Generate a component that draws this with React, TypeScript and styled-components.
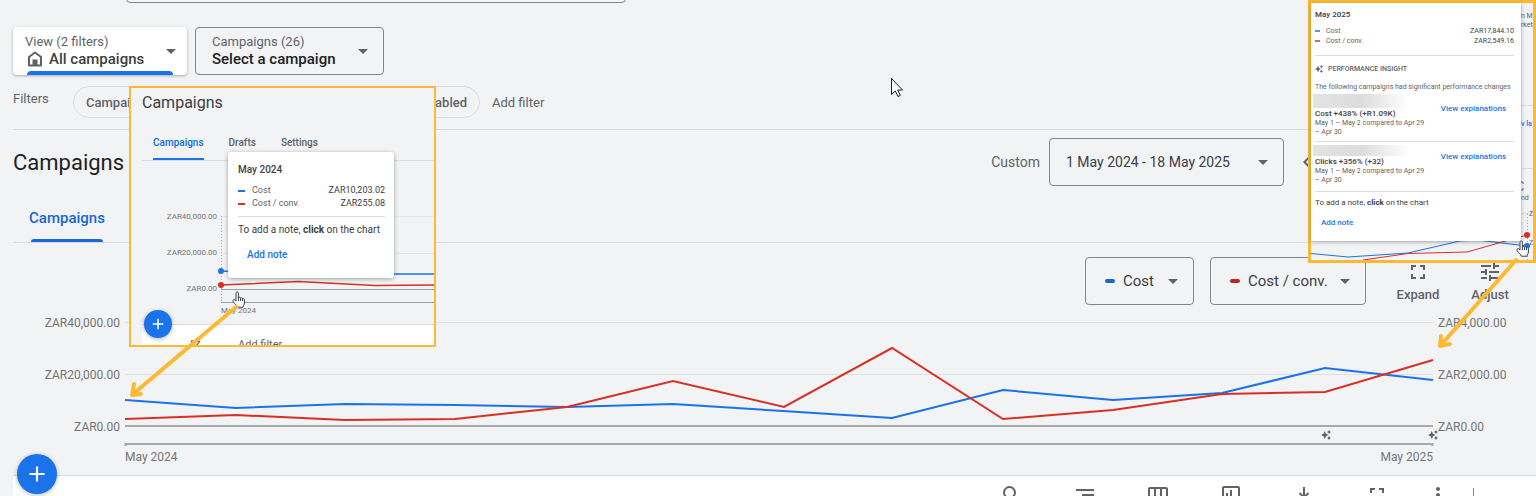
import React from "react";
import styled, { createGlobalStyle } from "styled-components";
import {
  MdAdd,
  MdFullscreen,
  MdKeyboardArrowLeft,
  MdKeyboardArrowRight,
  MdMoreVert,
  MdOutlineAssessment,
  MdOutlineFilterAlt,
  MdOutlineViewWeek,
  MdSearch,
  MdSegment,
  MdTune,
} from "react-icons/md";

const color = {
  page: "#f1f3f4",
  line: "#dadce0",
  outline: "#80868b",
  text: "#3c4043",
  muted: "#5f6368",
  axis: "#757575",
  blue: "#1a73e8",
  blueDark: "#1967d2",
  red: "#d93025",
  marker: "#fdb933",
};

const GlobalStyle = createGlobalStyle`
  *, *::before, *::after { box-sizing: border-box; }
  body {
    margin: 0;
    background: ${color.page};
    color: ${color.text};
    font-family: Roboto, "Liberation Sans", sans-serif;
    font-size: 13px;
  }
  button, select, input { font: inherit; color: inherit; }
  a { color: ${color.blue}; text-decoration: none; }
`;

const Page = styled.div`
  position: relative;
  height: 100vh;
  overflow: hidden;
`;

const SearchStrip = styled.header`
  display: flex;
  align-items: flex-end;
  height: 3px;
  padding-left: 126px;
  overflow: hidden;
`;

const SearchInput = styled.input`
  flex: none;
  width: 500px;
  height: 48px;
  border: 1px solid ${color.outline};
  border-radius: 4px;
  background: transparent;
`;

const ScopeBar = styled.div`
  display: flex;
  gap: 8px;
  padding: 24px 13px 0;
`;

const ScopePicker = styled.label<{ $active?: boolean; $width: number }>`
  position: relative;
  display: flex;
  align-items: center;
  width: ${(p) => p.$width}px;
  height: 48px;
  border-radius: 4px;
  padding: ${(p) => (p.$active ? "0 11px 0 12px" : "0 15px 0 16px")};
  border: ${(p) => (p.$active ? "0" : `1px solid ${color.outline}`)};
  background: ${(p) => (p.$active ? "#fff" : "transparent")};
  box-shadow: ${(p) => (p.$active ? "0 1px 3px rgba(60, 64, 67, 0.4)" : "none")};
  color: ${(p) => (p.$active ? color.text : "#202124")};
`;

const ScopeText = styled.span`
  display: flex;
  flex: 1;
  flex-direction: column;
`;

const ScopeCaption = styled.span`
  line-height: 16px;
  color: ${color.muted};
`;

const ScopeValue = styled.span<{ $icon?: boolean }>`
  display: flex;
  align-items: center;
  gap: 6px;
  height: 18px;
  padding-left: ${(p) => (p.$icon ? 2 : 0)}px;
  font-size: 15px;
  font-weight: 500;
`;

const ActiveBar = styled.span`
  position: absolute;
  left: 14px;
  right: 14px;
  bottom: 0;
  height: 4px;
  border-radius: 4px 4px 0 0;
  background: ${color.blue};
`;

const PlainSelect = styled.select`
  flex: 1;
  min-width: 0;
  padding: 0;
  border: 0;
  background: transparent;
  appearance: none;
  outline: none;
`;

const CaretShape = styled.span`
  flex: none;
  width: 0;
  height: 0;
  border: 5px solid transparent;
  border-top-color: ${color.muted};
  border-bottom: 0;
`;

const FilterBar = styled.div`
  display: flex;
  margin: 11px 0 0 13px;
  padding-bottom: 11px;
  border-bottom: 1px solid ${color.line};
  color: ${color.muted};
`;

const FilterLabel = styled.span`
  width: 60px;
  line-height: 26px;
`;

const ChipGroup = styled.div`
  display: flex;
  gap: 8px;
  width: 407px;
`;

const Chip = styled.button<{ $grow?: boolean }>`
  flex: ${(p) => (p.$grow ? 1 : "none")};
  height: 32px;
  padding: 0 12px;
  border: 1px solid ${color.line};
  border-radius: 16px;
  background: transparent;
  font-weight: 500;
  text-align: ${(p) => (p.$grow ? "right" : "left")};
`;

const AddFilter = styled.button`
  margin-left: 12px;
  padding: 0;
  border: 0;
  background: none;
`;

const TitleBar = styled.div`
  display: flex;
  align-items: center;
  height: 64px;
  padding-left: 13px;
`;

const Title = styled.h1`
  flex: 1;
  margin: 0;
  color: #202124;
  font-size: 22px;
  font-weight: 400;
`;

const RangeLabel = styled.label`
  margin-right: 9px;
  font-size: 14px;
  color: ${color.muted};
`;

const OutlinedPicker = styled.label<{ $width: number; $wide?: boolean }>`
  display: flex;
  align-items: center;
  gap: 8px;
  width: ${(p) => p.$width}px;
  height: 48px;
  padding: 0 15px 0 ${(p) => (p.$wide ? 16 : 19)}px;
  border: 1px solid ${color.outline};
  border-radius: 4px;
  font-size: ${(p) => (p.$wide ? 14 : 15)}px;
`;

const RangeNav = styled.div`
  display: flex;
  width: 241px;
  margin-left: 11px;
`;

const IconButton = styled.button`
  display: flex;
  padding: 0;
  border: 0;
  background: none;
  color: ${color.muted};
`;

const TabBar = styled.nav`
  display: flex;
  height: 49px;
  margin-left: 13px;
  padding-left: 16px;
  border-bottom: 1px solid ${color.line};
`;

const Tab = styled.a`
  position: relative;
  color: ${color.blueDark};
  font-size: 15px;
  font-weight: 500;
  line-height: 48px;

  &::after {
    content: "";
    position: absolute;
    left: 2px;
    right: 2px;
    bottom: 0;
    height: 3px;
    border-radius: 3px 3px 0 0;
    background: ${color.blueDark};
  }
`;

const MetricBar = styled.div`
  display: flex;
  justify-content: flex-end;
  gap: 16px;
  padding: 14px 10px 0 0;
`;

const Swatch = styled.span<{ $color: string }>`
  flex: none;
  width: 10px;
  height: 4px;
  border-radius: 2px;
  background: ${(p) => p.$color};
`;

const ToolGroup = styled.div`
  display: flex;
`;

const ToolButton = styled.button`
  display: flex;
  flex-direction: column;
  align-items: center;
  width: 72px;
  padding: 3px 0 0;
  border: 0;
  background: none;
  color: ${color.muted};
  font-weight: 500;
  line-height: 21px;
`;

const ChartGrid = styled.section`
  display: grid;
  grid-template-columns: 107px 1fr 98px;
  column-gap: 5px;
  padding-bottom: 9px;
  border-bottom: 1px solid ${color.line};
  margin-left: 13px;
  color: ${color.axis};
  font-size: 12px;
  line-height: 18px;
`;

const ScaleColumn = styled.div<{ $end?: boolean }>`
  display: flex;
  flex-direction: column;
  gap: 34px;
  padding-top: 9px;
  text-align: ${(p) => (p.$end ? "left" : "right")};
`;

const Plot = styled.div`
  position: relative;
  min-width: 0;
`;

const PlotSvg = styled.svg`
  display: block;
  width: 100%;
  height: 141px;
  overflow: visible;

  polyline, line, path { vector-effect: non-scaling-stroke; }
`;

const Dates = styled.div`
  display: flex;
  justify-content: space-between;
  margin-top: 2px;
`;

const InsightMark = styled.span<{ $at: number }>`
  position: absolute;
  top: 125px;
  left: ${(p) => p.$at}%;
  display: flex;
  margin-left: -5px;
  color: ${color.muted};
`;

const TableBar = styled.div`
  display: flex;
  justify-content: flex-end;
  height: 60px;
  margin-left: 13px;
  padding: 7px 62px 0 0;
  background: #fff;
`;

const TableTool = styled.button<{ $narrow?: boolean }>`
  display: flex;
  justify-content: center;
  width: ${(p) => (p.$narrow ? 50 : 73)}px;
  padding: 0;
  border: 0;
  background: none;
  color: ${color.muted};
`;

const Divider = styled.span`
  width: 1px;
  margin: 5px 0 0 10px;
  background: ${color.outline};
`;

const Fab = styled.button<{ $small?: boolean }>`
  position: absolute;
  left: ${(p) => (p.$small ? 13 : 17)}px;
  bottom: ${(p) => (p.$small ? 7 : 2)}px;
  display: flex;
  align-items: center;
  justify-content: center;
  width: ${(p) => (p.$small ? 28 : 40)}px;
  height: ${(p) => (p.$small ? 28 : 40)}px;
  padding: 0;
  border: 0;
  border-radius: 50%;
  background: ${color.blue};
  box-shadow: 0 1px 4px rgba(60, 64, 67, 0.4);
  color: #fff;
`;

const Pointer = styled.svg<{ $x: number; $y: number }>`
  position: absolute;
  left: ${(p) => p.$x}px;
  top: ${(p) => p.$y}px;
  overflow: visible;
`;

/* Callouts that lie over the page */

const StartCallout = styled.aside`
  position: absolute;
  top: 86px;
  left: 129px;
  width: 307px;
  height: 261px;
  border: 2px solid ${color.marker};
  background: ${color.page};
`;

const CalloutClip = styled.div`
  display: flex;
  flex-direction: column;
  height: 100%;
  overflow: hidden;
`;

const CalloutTitle = styled.h2`
  flex: none;
  margin: 0;
  padding-left: 11px;
  font-size: 16px;
  font-weight: 400;
  line-height: 30px;
`;

const CalloutTabs = styled.nav`
  display: flex;
  flex: none;
  gap: 25px;
  height: 43px;
  margin-left: 11px;
  padding-left: 11px;
  border-bottom: 1px solid ${color.line};
`;

const CalloutTab = styled.a<{ $active?: boolean }>`
  padding-top: 17px;
  border-bottom: 2px solid ${(p) => (p.$active ? color.blue : "transparent")};
  color: ${(p) => (p.$active ? color.blueDark : color.muted)};
  font-size: 10px;
  font-weight: 500;
  line-height: 16px;
`;

const CalloutChart = styled.div`
  display: grid;
  flex: none;
  grid-template-columns: 86px 1fr;
  column-gap: 4px;
  height: 163px;
  color: ${color.axis};
  font-size: 8px;
  line-height: 12px;
`;

const CalloutScale = styled.div`
  display: flex;
  flex-direction: column;
  gap: 24px;
  padding-top: 50px;
  text-align: right;
`;

const CalloutPlot = styled.div`
  display: flex;
  flex-direction: column;
  gap: 2px;
  min-width: 0;
`;

const CalloutSvg = styled.svg`
  display: block;
  flex: none;
  overflow: visible;
`;

const CalloutFooter = styled.div`
  display: flex;
  flex: none;
  gap: 35px;
  margin-left: 11px;
  padding: 13px 0 0 46px;
  border-top: 1px solid ${color.line};
  background: #fff;
  color: ${color.muted};
  font-size: 11px;
  line-height: 14px;
`;

const StartTip = styled.div`
  position: absolute;
  top: 64px;
  left: 97px;
  width: 166px;
  height: 126px;
  padding: 10px 9px 0 10px;
  border-radius: 3px;
  background: #fff;
  box-shadow: 0 1px 4px rgba(60, 64, 67, 0.45);
`;

const TipTitle = styled.h3<{ $size: number }>`
  margin: 0;
  font-size: ${(p) => p.$size}px;
  font-weight: 500;
  line-height: ${(p) => (p.$size > 8 ? 16 : 12)}px;
`;

const TipTable = styled.table<{ $small?: boolean }>`
  width: 100%;
  margin-top: ${(p) => (p.$small ? 5 : 6)}px;
  border-collapse: collapse;
  font-size: ${(p) => (p.$small ? 7 : 9)}px;
  line-height: ${(p) => (p.$small ? 10 : 13)}px;

  th {
    padding: 0;
    color: ${color.muted};
    font-weight: 400;
    text-align: left;
  }
  td {
    padding: 0;
    text-align: right;
  }
`;

const TipLabel = styled.span<{ $small?: boolean }>`
  display: flex;
  align-items: center;
  gap: ${(p) => (p.$small ? 6 : 7)}px;
`;

const Dash = styled.span<{ $color: string; $small?: boolean }>`
  width: ${(p) => (p.$small ? 5 : 7)}px;
  height: 2px;
  background: ${(p) => p.$color};
  opacity: ${(p) => (p.$small ? 0.75 : 1)};
`;

const TipRule = styled.hr<{ $top: number }>`
  height: 1px;
  margin: ${(p) => p.$top}px 0 0;
  border: 0;
  background: ${color.line};
`;

const TipText = styled.p<{ $small?: boolean }>`
  margin: ${(p) => (p.$small ? 5 : 6)}px 0 0;
  font-size: ${(p) => (p.$small ? 8 : 10)}px;
  line-height: ${(p) => (p.$small ? 12 : 14)}px;
  white-space: nowrap;
`;

const TipAction = styled.button<{ $small?: boolean }>`
  display: block;
  margin: ${(p) => (p.$small ? "8px 0 0 6px" : "10px 0 0 9px")};
  padding: 0;
  border: 0;
  background: none;
  color: ${color.blue};
  font-size: ${(p) => (p.$small ? 8 : 10)}px;
  font-weight: 500;
  line-height: ${(p) => (p.$small ? 12 : 16)}px;
`;

const EndCallout = styled.aside`
  position: absolute;
  top: 0;
  right: 0;
  width: 228px;
  height: 263px;
  border: 3px solid ${color.marker};
  background: ${color.page};
`;

const Backdrop = styled.div`
  position: absolute;
  inset: 0;
  overflow: hidden;
`;

const EdgeText = styled.span<{ $y: number; $x?: number; $link?: boolean }>`
  position: absolute;
  left: ${(p) => p.$x ?? 210}px;
  top: ${(p) => p.$y}px;
  color: ${(p) => (p.$link ? color.blue : color.muted)};
  font-size: 7px;
  font-weight: ${(p) => (p.$link ? 500 : 400)};
  line-height: 10px;
  white-space: nowrap;
`;

const BackdropSvg = styled.svg`
  position: absolute;
  inset: 0;
`;

const EndTip = styled.div`
  position: relative;
  width: 210px;
  height: 238px;
  padding: 6px 7px 0 4px;
  background: #fff;
  box-shadow: 0 1px 4px rgba(60, 64, 67, 0.45);
`;

const InsightHeading = styled.h4`
  display: flex;
  align-items: center;
  gap: 5px;
  margin: 7px 0;
  color: ${color.muted};
  font-size: 7px;
  font-weight: 500;
  line-height: 12px;
`;

const InsightIntro = styled.p`
  margin: 0 0 2px;
  color: ${color.muted};
  font-size: 7px;
  line-height: 10px;
  white-space: nowrap;
`;

const Insight = styled.article<{ $tall?: boolean }>`
  display: flex;
  justify-content: space-between;
  padding: ${(p) => (p.$tall ? "0 8px 4px 0" : "3px 8px 6px 0")};
  border-bottom: 1px solid ${color.line};
  color: ${color.muted};
  font-size: 7px;
  line-height: 9px;
`;

const InsightBody = styled.div`
  width: 115px;
  white-space: nowrap;
`;

const HiddenName = styled.div<{ $tall?: boolean }>`
  width: 96px;
  height: ${(p) => (p.$tall ? 14 : 11)}px;
  margin-left: -2px;
  background: linear-gradient(90deg, #e3e3e3, #dcdcdc 50%, #fff);
`;

const InsightName = styled.strong`
  display: block;
  color: ${color.text};
  font-size: 8px;
  font-weight: 500;
  line-height: 11px;
`;

const InsightLink = styled.a<{ $tall?: boolean }>`
  margin-top: ${(p) => (p.$tall ? 10 : 7)}px;
  font-size: 8px;
  font-weight: 500;
  line-height: 10px;
`;

const Caret = () => <CaretShape aria-hidden="true" />;

const Home = () => (
  <svg width="16" height="16" viewBox="0 0 16 16" fill="none" aria-hidden="true">
    <path d="M2 14.5V6L8 1.5L14 6V14.5Z" stroke={color.muted} strokeWidth="2" strokeLinejoin="round" />
    <path d="M5.5 14.5V8.5H10.5V14.5Z" fill={color.muted} />
  </svg>
);

const Sparkle = ({ size }: { size: number }) => (
  <svg width={size} height={size} viewBox="0 0 20 20" fill="currentColor" aria-hidden="true">
    <path d="M7.500 2L10 7.500L15 10L10 12.500L7.500 18L5 12.500L0 10L5 7.500Z" />
    <path d="M16 0L17.500 2.500L20 4L17.500 5.500L16 8L14.500 5.500L12 4L14.500 2.500Z" />
    <path d="M16 12L17.500 14.500L20 16L17.500 17.500L16 20L14.500 17.500L12 16L14.500 14.500Z" />
  </svg>
);

const DownloadIcon = () => (
  <svg width="24" height="24" viewBox="0 0 24 24" fill="none" stroke="currentColor" strokeWidth="2" aria-hidden="true">
    <path d="M12 4V15M7.500 10L12 14.500L16.500 10M5 19H19" />
  </svg>
);

const Hand = ({ x, y }: { x: number; y: number }) => (
  <Pointer $x={x} $y={y} width="13" height="17" viewBox="0 0 13 17" aria-hidden="true">
    <path
      d="M4 10V2.2C4 .4 6.4 .4 6.4 2.2V7C6.6 5.8 8.4 6 8.5 7.2C9 6.3 10.4 6.6 10.5 7.8C11.2 7.2 12.4 7.6 12.4 8.8V12C12.4 14 11 14.4 11 16.2H5.2C5 14.4 3 13.4 1.2 10.6C.2 9 2 8 3 9Z"
      fill="#fff"
      stroke="#3a3f4b"
      strokeWidth="1"
    />
    <path d="M6.4 7V10M8.5 7.4V10M10.5 8V10" stroke="#3a3f4b" strokeWidth="1" />
  </Pointer>
);

const costPoints =
  "0,95 111,103 220,99 330,100 442,102 548,99 658,106 767,113 878,85 988,95 1097,88 1200,63 1308,75";
const convPoints =
  "0,114 111,110 220,115 330,114 442,102 548,76 659,102 767,43 878,114 988,105 1097,89 1200,87 1308,55";

const MainChart = () => (
  <PlotSvg viewBox="0 0 1308 141" preserveAspectRatio="none" role="img" aria-label="Cost and cost per conversion by month">
    <path d="M0 17.5H1308M0 69.5H1308" stroke="#e0e0e0" />
    <path d="M0 121H1308" stroke="#a6a8aa" strokeWidth="2" />
    <path d="M0.5 141V139H1307.5V141" fill="none" stroke="#a6a8aa" strokeWidth="2" />
    <polyline points={costPoints} fill="none" stroke={color.blue} strokeWidth="2" />
    <polyline points={convPoints} fill="none" stroke={color.red} strokeWidth="2" />
  </PlotSvg>
);

const Start = () => (
  <StartCallout aria-label="Start of period">
    <CalloutClip>
      <CalloutTitle>Campaigns</CalloutTitle>
      <CalloutTabs>
        <CalloutTab href="#campaigns" $active>Campaigns</CalloutTab>
        <CalloutTab href="#drafts">Drafts</CalloutTab>
        <CalloutTab href="#settings">Settings</CalloutTab>
      </CalloutTabs>
      <CalloutChart>
        <CalloutScale>
          <span>ZAR40,000.00</span>
          <span>ZAR20,000.00</span>
          <span>ZAR0.00</span>
        </CalloutScale>
        <CalloutPlot>
          <CalloutSvg width="213" height="142" viewBox="0 0 213 142" aria-hidden="true">
            <path d="M0 55.5H213M0 92.5H213" stroke="#e3e5e7" />
            <path d="M0 128.5H213M0 141.5H213" stroke="#9a9c9f" />
            <path d="M.5 55V142" stroke="#aaa" strokeDasharray="1 2" />
            <polyline points="0,110 77,114 173,113 213,113" fill="none" stroke={color.blue} strokeWidth="1.5" />
            <polyline points="0,124 77,120.5 154,124.500 213,124" fill="none" stroke={color.red} strokeWidth="1.5" />
            <circle cx="0" cy="110" r="3" fill={color.blue} />
            <circle cx="0" cy="124" r="3" fill={color.red} />
          </CalloutSvg>
          <span>May 2024</span>
        </CalloutPlot>
      </CalloutChart>
      <CalloutFooter>
        <MdOutlineFilterAlt size={15} />
        <span>Add filter</span>
      </CalloutFooter>
    </CalloutClip>
    <Fab type="button" $small aria-label="Create">
      <MdAdd size={18} />
    </Fab>
    <StartTip>
      <TipTitle $size={10}>May 2024</TipTitle>
      <TipTable>
        <tbody>
          <tr>
            <th scope="row"><TipLabel><Dash $color={color.blue} />Cost</TipLabel></th>
            <td>ZAR10,203.02</td>
          </tr>
          <tr>
            <th scope="row"><TipLabel><Dash $color={color.red} />Cost / conv.</TipLabel></th>
            <td>ZAR255.08</td>
          </tr>
        </tbody>
      </TipTable>
      <TipRule $top={6} />
      <TipText>To add a note, <b>click</b> on the chart</TipText>
      <TipAction type="button">Add note</TipAction>
    </StartTip>
    <Hand x={101} y={203} />
    <Pointer $x={-2} $y={214} width="112" height="96" viewBox="0 0 112 96" aria-hidden="true">
      <path d="M107 5L3 93M5 82L3 93L12 92" fill="none" stroke={color.marker} strokeWidth="4" strokeLinejoin="round" strokeLinecap="round" />
    </Pointer>
  </StartCallout>
);

const End = () => (
  <EndCallout aria-label="End of period">
    <Backdrop>
      <EdgeText $y={8}>n M</EdgeText>
      <EdgeText $y={17}>rket</EdgeText>
      <EdgeText $y={116} $link>v la</EdgeText>
      <EdgeText $y={190}>nd</EdgeText>
      <EdgeText $y={206} $x={218}>Z</EdgeText>
      <EdgeText $y={235} $x={218}>Z</EdgeText>
      <BackdropSvg width="222" height="257" viewBox="0 0 222 257" aria-hidden="true">
        <path d="M210 102.500H222M210 165.500H222M210 210.500H217" stroke={color.line} />
        <path d="M210 179H212V181M210 187H212V185" fill="none" stroke={color.muted} />
        <path d="M216.500 211V257" stroke="#aaa" strokeDasharray="1 2" />
        <polyline points="0,250.500 37,254 97,250 149,238 166,237 216,243" fill="none" stroke={color.blue} />
        <polyline points="52,257 97,250.500 156,249 216,232" fill="none" stroke={color.red} />
        <circle cx="216" cy="232" r="3" fill={color.red} />
        <circle cx="216" cy="243" r="3" fill={color.blue} />
      </BackdropSvg>
    </Backdrop>
    <EndTip>
      <TipTitle $size={8}>May 2025</TipTitle>
      <TipTable $small>
        <tbody>
          <tr>
            <th scope="row"><TipLabel $small><Dash $small $color={color.blue} />Cost</TipLabel></th>
            <td>ZAR17,844.10</td>
          </tr>
          <tr>
            <th scope="row"><TipLabel $small><Dash $small $color={color.red} />Cost / conv.</TipLabel></th>
            <td>ZAR2,549.16</td>
          </tr>
        </tbody>
      </TipTable>
      <TipRule $top={9} />
      <InsightHeading><Sparkle size={8} />PERFORMANCE INSIGHT</InsightHeading>
      <InsightIntro>The following campaigns had significant performance changes</InsightIntro>
      <Insight $tall>
        <InsightBody>
          <HiddenName $tall />
          <InsightName>Cost +438% (+R1.09K)</InsightName>
          May 1 – May 2 compared to Apr 29<br />– Apr 30
        </InsightBody>
        <InsightLink $tall href="#cost-explanations">View explanations</InsightLink>
      </Insight>
      <Insight>
        <InsightBody>
          <HiddenName />
          <InsightName>Clicks +356% (+32)</InsightName>
          May 1 – May 2 compared to Apr 29<br />– Apr 30
        </InsightBody>
        <InsightLink href="#clicks-explanations">View explanations</InsightLink>
      </Insight>
      <TipText $small>To add a note, <b>click</b> on the chart</TipText>
      <TipAction type="button" $small>Add note</TipAction>
    </EndTip>
    <Hand x={205} y={237} />
    <Pointer $x={125} $y={252} width="84" height="96" viewBox="0 0 84 96" aria-hidden="true">
      <path d="M80 5L4 91M5 81L4 91L14 89" fill="none" stroke={color.marker} strokeWidth="4" strokeLinejoin="round" strokeLinecap="round" />
    </Pointer>
  </EndCallout>
);

export default function App() {
  return (
    <>
      <GlobalStyle />
      <Page>
        <SearchStrip>
          <SearchInput type="search" aria-label="Search" />
        </SearchStrip>

        <ScopeBar>
          <ScopePicker $active $width={174}>
            <ScopeText>
              <ScopeCaption>View (2 filters)</ScopeCaption>
              <ScopeValue $icon>
                <Home />
                <PlainSelect><option>All campaigns</option></PlainSelect>
              </ScopeValue>
            </ScopeText>
            <Caret />
            <ActiveBar />
          </ScopePicker>
          <ScopePicker $width={189}>
            <ScopeText>
              <ScopeCaption>Campaigns (26)</ScopeCaption>
              <ScopeValue>
                <PlainSelect><option>Select a campaign</option></PlainSelect>
              </ScopeValue>
            </ScopeText>
            <Caret />
          </ScopePicker>
        </ScopeBar>

        <FilterBar>
          <FilterLabel>Filters</FilterLabel>
          <ChipGroup>
            <Chip type="button">Campaign status: All</Chip>
            <Chip type="button" $grow>Ad group status: Enabled</Chip>
          </ChipGroup>
          <AddFilter type="button">Add filter</AddFilter>
        </FilterBar>

        <TitleBar>
          <Title>Campaigns</Title>
          <RangeLabel htmlFor="range">Custom</RangeLabel>
          <OutlinedPicker $width={235} $wide>
            <PlainSelect id="range"><option>1 May 2024 - 18 May 2025</option></PlainSelect>
            <Caret />
          </OutlinedPicker>
          <RangeNav>
            <IconButton type="button" aria-label="Previous period"><MdKeyboardArrowLeft size={24} /></IconButton>
            <IconButton type="button" aria-label="Next period"><MdKeyboardArrowRight size={24} /></IconButton>
          </RangeNav>
        </TitleBar>

        <TabBar>
          <Tab href="#campaigns">Campaigns</Tab>
        </TabBar>

        <MetricBar>
          <OutlinedPicker $width={109}>
            <Swatch $color={color.blueDark} />
            <PlainSelect aria-label="First metric"><option>Cost</option></PlainSelect>
            <Caret />
          </OutlinedPicker>
          <OutlinedPicker $width={156}>
            <Swatch $color="#c5221f" />
            <PlainSelect aria-label="Second metric"><option>Cost / conv.</option></PlainSelect>
            <Caret />
          </OutlinedPicker>
          <ToolGroup>
            <ToolButton type="button"><MdFullscreen size={24} />Expand</ToolButton>
            <ToolButton type="button"><MdTune size={24} />Adjust</ToolButton>
          </ToolGroup>
        </MetricBar>

        <ChartGrid>
          <ScaleColumn>
            <span>ZAR40,000.00</span>
            <span>ZAR20,000.00</span>
            <span>ZAR0.00</span>
          </ScaleColumn>
          <Plot>
            <MainChart />
            <InsightMark $at={91.8}><Sparkle size={10} /></InsightMark>
            <InsightMark $at={100}><Sparkle size={10} /></InsightMark>
            <Dates>
              <span>May 2024</span>
              <span>May 2025</span>
            </Dates>
          </Plot>
          <ScaleColumn $end>
            <span>ZAR4,000.00</span>
            <span>ZAR2,000.00</span>
            <span>ZAR0.00</span>
          </ScaleColumn>
        </ChartGrid>

        <TableBar>
          <TableTool type="button" aria-label="Search"><MdSearch size={24} /></TableTool>
          <TableTool type="button" aria-label="Segment"><MdSegment size={24} /></TableTool>
          <TableTool type="button" aria-label="Columns"><MdOutlineViewWeek size={24} /></TableTool>
          <TableTool type="button" aria-label="Reports"><MdOutlineAssessment size={24} /></TableTool>
          <TableTool type="button" aria-label="Download"><DownloadIcon /></TableTool>
          <TableTool type="button" aria-label="Expand"><MdFullscreen size={24} /></TableTool>
          <TableTool type="button" aria-label="More" $narrow><MdMoreVert size={24} /></TableTool>
          <Divider />
        </TableBar>

        <Fab type="button" aria-label="Create"><MdAdd size={26} /></Fab>
        <Start />
        <End />
        <Pointer $x={891} $y={78} width="12" height="19" viewBox="0 0 12 19" aria-hidden="true">
          <path d="M.5 .5V16.500L4.300 13L7 18.500L9.300 17.400L6.700 12H11.500Z" fill="#fff" stroke="#1b1b28" />
        </Pointer>
      </Page>
    </>
  );
}
